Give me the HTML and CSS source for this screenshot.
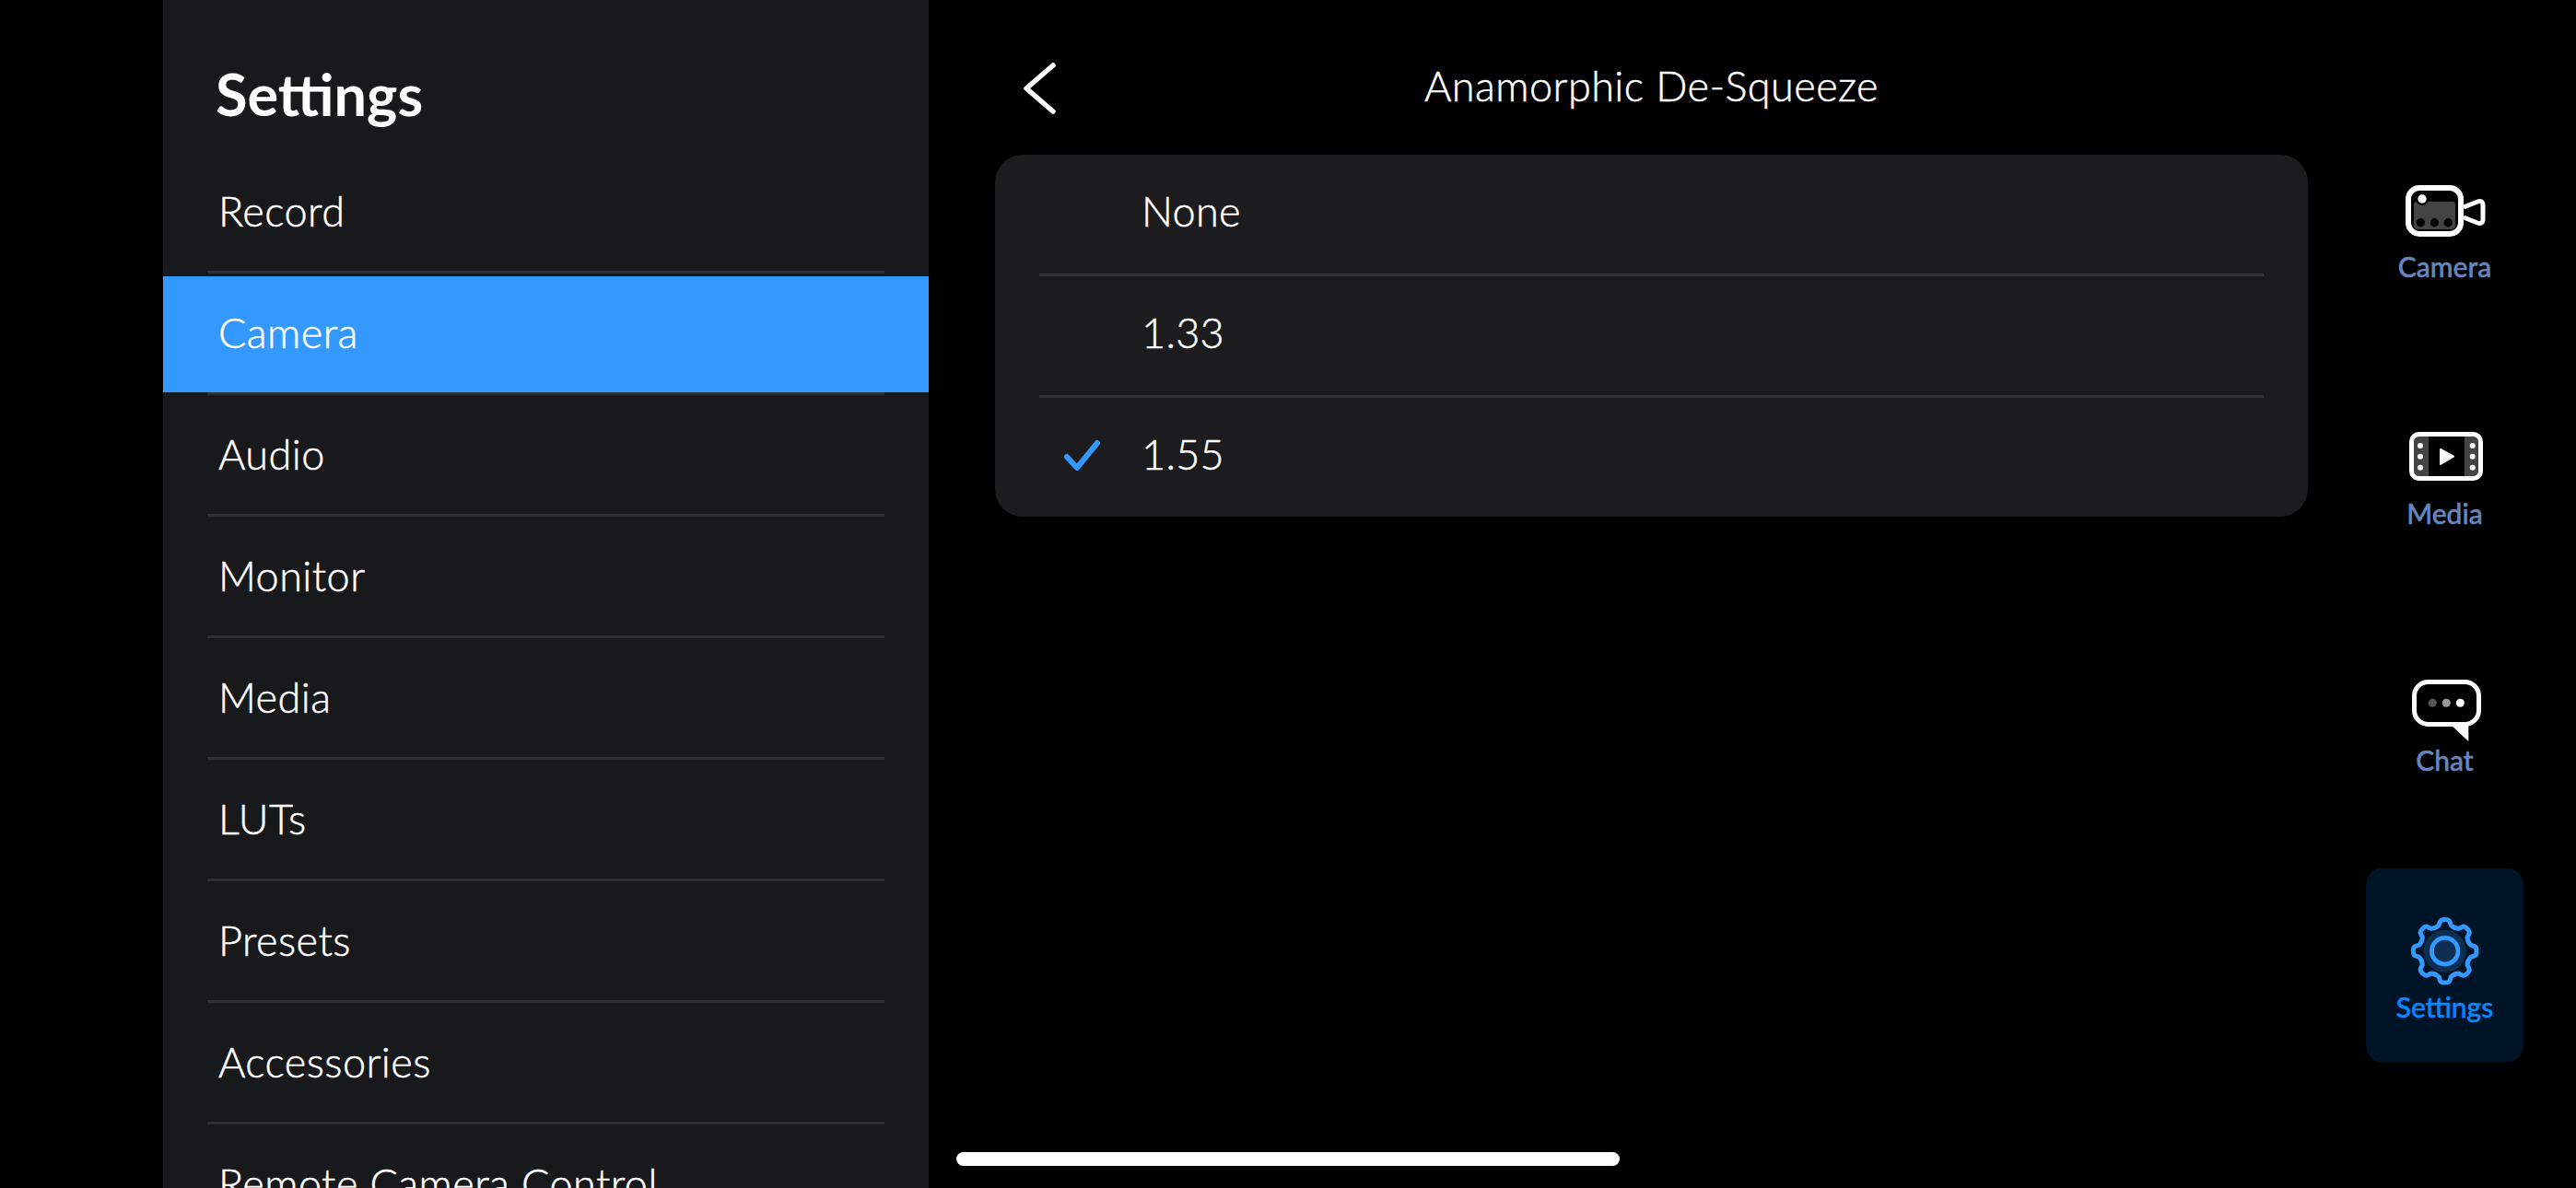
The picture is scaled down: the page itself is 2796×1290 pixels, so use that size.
FILE: index.html
```html
<!DOCTYPE html>
<html lang="en">
<head>
<meta charset="utf-8">
<title>Anamorphic De-Squeeze</title>
<link rel="stylesheet" href="styles.css">
</head>
<body>
<div class="app">
  <aside class="sidebar">
    <h1 class="sidebar-title">Settings</h1>
    <ul class="menu">
      <li class="menu-item">Record</li>
      <li class="menu-item active">Camera</li>
      <li class="menu-item">Audio</li>
      <li class="menu-item">Monitor</li>
      <li class="menu-item">Media</li>
      <li class="menu-item">LUTs</li>
      <li class="menu-item">Presets</li>
      <li class="menu-item">Accessories</li>
      <li class="menu-item">Remote Camera Control</li>
    </ul>
  </aside>
  <main class="detail">
    <header class="detail-head">
      <svg class="back" width="40" height="60" viewBox="0 0 40 60"><path d="M35 5 L6 30 L35 55" fill="none" stroke="#fff" stroke-width="5.5" stroke-linecap="round" stroke-linejoin="round"/></svg>
      <h2 class="detail-title">Anamorphic De-Squeeze</h2>
    </header>
    <section class="card">
      <div class="option"><span class="slot"></span>None</div>
      <div class="option"><span class="slot"></span>1.33</div>
      <div class="option">
        <span class="slot"><svg class="check" width="46" height="42" viewBox="0 0 46 42"><path d="M6 20 L17 32 L39 5" fill="none" stroke="#3399ff" stroke-width="6" stroke-linecap="round" stroke-linejoin="round"/></svg></span>1.55
      </div>
    </section>
  </main>
  <nav class="tabs">
    <div class="tab">
      <svg class="tab-icon" viewBox="0 0 121 92">
        <rect x="21" y="25" width="57" height="50" rx="12" fill="none" stroke="#fff" stroke-width="6"/>
        <path d="M27 43 Q27 40 30 40 H69 Q72 40 72 43 V66 Q72 70 68 70 H31 Q27 70 27 66 Z" fill="#444"/>
        <circle cx="36" cy="37" r="7" fill="#000"/>
        <circle cx="36" cy="37" r="4.7" fill="#fff"/>
        <circle cx="34.3" cy="62.7" r="4.7" fill="#000"/>
        <circle cx="49.3" cy="62.7" r="4.7" fill="#000"/>
        <circle cx="64.3" cy="62.7" r="4.7" fill="#000"/>
        <path d="M81 46 L96 40 Q102 38 102 44 V59 Q102 65 96 63 L81 57" fill="none" stroke="#fff" stroke-width="5" stroke-linejoin="round"/>
      </svg>
      <span class="tab-label">Camera</span>
    </div>
    <div class="tab">
      <svg class="tab-icon" viewBox="0 0 121 92">
        <rect x="27" y="27" width="16" height="43" fill="#444"/>
        <rect x="82" y="27" width="15" height="43" fill="#444"/>
        <rect x="24.5" y="24.5" width="75" height="48" rx="8" fill="none" stroke="#fff" stroke-width="5"/>
        <g fill="#fff">
          <circle cx="34" cy="37" r="3"/><circle cx="34" cy="48.7" r="3"/><circle cx="34" cy="60.7" r="3"/>
          <circle cx="90.7" cy="37" r="3"/><circle cx="90.7" cy="48.7" r="3"/><circle cx="90.7" cy="60.7" r="3"/>
        </g>
        <path d="M56 41 V57 L70 48.7 Z" fill="#fff" stroke="#fff" stroke-width="2" stroke-linejoin="round"/>
      </svg>
      <span class="tab-label">Media</span>
    </div>
    <div class="tab">
      <svg class="tab-icon" viewBox="0 0 121 92">
        <rect x="27.5" y="25.5" width="70" height="46" rx="15" fill="none" stroke="#fff" stroke-width="5"/>
        <path d="M67 72 H86.3 V90 Z" fill="#fff"/>
        <circle cx="47.3" cy="48.3" r="4.5" fill="#555"/>
        <circle cx="62.3" cy="48.3" r="4.5" fill="#999"/>
        <circle cx="77.3" cy="48.3" r="4.5" fill="#fff"/>
      </svg>
      <span class="tab-label">Chat</span>
    </div>
    <div class="tab selected">
      <svg class="tab-icon" viewBox="0 0 121 92">
        <defs>
          <path id="tooth" d="M-10.5 -25.4 Q-7.5 -26.6 -6.6 -28 L-5.2 -32 Q-4.5 -34.3 0 -34.3 Q4.5 -34.3 5.2 -32 L6.6 -28 Q7.5 -26.6 10.5 -25.4" fill="none" stroke="#3399ff" stroke-width="5" stroke-linecap="round"/>
        </defs>
        <g transform="translate(60.7 49.7)">
          <circle r="23" fill="#0f2f52"/>
          <circle r="14.3" fill="none" stroke="#3399ff" stroke-width="4.8"/>
          <use href="#tooth"/>
          <use href="#tooth" transform="rotate(45)"/>
          <use href="#tooth" transform="rotate(90)"/>
          <use href="#tooth" transform="rotate(135)"/>
          <use href="#tooth" transform="rotate(180)"/>
          <use href="#tooth" transform="rotate(225)"/>
          <use href="#tooth" transform="rotate(270)"/>
          <use href="#tooth" transform="rotate(315)"/>
        </g>
      </svg>
      <span class="tab-label">Settings</span>
    </div>
  </nav>
  <div class="home-bar"></div>
</div>
</body>
</html>
```
FILE: styles.css
```css
* { box-sizing: border-box; }
html, body { margin: 0; height: 100%; background: #000; overflow: hidden; }
body { font-family: Lato, "Noto Sans", sans-serif; color: #fff; }
.app { display: flex; width: 2796px; height: 1290px; padding-left: 177px; }

.sidebar { width: 831px; height: 1290px; background: #18191b; overflow: hidden; flex: none; }
.sidebar-title { margin: 0; padding: 64px 0 0 57px; height: 165px; font-size: 63px; font-weight: 700; line-height: 76px; }
.menu { list-style: none; margin: 0; padding: 0; }
.menu-item { position: relative; height: 132px; padding-left: 60px; font-size: 45px; font-weight: 300; letter-spacing: 0.45px; -webkit-text-stroke: 0.5px currentColor; line-height: 122px; border-top: 3px solid transparent; border-bottom: 3px solid transparent; background-clip: padding-box; }
.menu-item::after { content: ""; position: absolute; left: 48px; right: 48px; bottom: -3px; height: 3px; background: #2e2f31; }
.active { background-color: #3399ff; }

.detail { width: 1497px; flex: none; padding-left: 72px; }
.detail-head { width: 1425px; height: 168px; padding-top: 66px; display: grid; grid-template-columns: 1fr auto 1fr; align-items: start; }
.back { margin-left: 28px; }
.detail-title { margin: 0; font-size: 45px; font-weight: 300; letter-spacing: 0.45px; -webkit-text-stroke: 0.5px currentColor; line-height: 54px; }
.card { width: 1425px; background: #1c1c1e; border-radius: 30px; }
.option { position: relative; height: 132px; display: flex; align-items: flex-start; padding-left: 72px; font-size: 45px; font-weight: 300; letter-spacing: 0.3px; -webkit-text-stroke: 0.5px currentColor; line-height: 123px; }
.option:not(:last-child)::after { content: ""; position: absolute; left: 48px; right: 48px; bottom: 0; height: 3px; background: #333336; }
.option:last-child { height: 129px; }
.slot { width: 87px; flex: none; }
.check { display: block; margin-top: 44px; }

.tabs { flex: none; width: 291px; padding: 139px 0 0 63px; display: flex; flex-direction: column; gap: 58px; }
.tab { width: 171px; height: 210px; padding-top: 40px; border-radius: 18px; display: flex; flex-direction: column; align-items: center; }
.selected { background: #001428; }
.tab-icon { display: block; width: 121px; height: 92px; flex: none; }
.tab-label { font-size: 30px; line-height: 36px; font-weight: 500; color: #6687bd; -webkit-text-stroke: 0.5px currentColor; }
.selected .tab-label { color: #0a84ff; }

.home-bar { position: absolute; left: 1038px; top: 1251px; width: 720px; height: 15px; border-radius: 8px; background: #fff; }
```
